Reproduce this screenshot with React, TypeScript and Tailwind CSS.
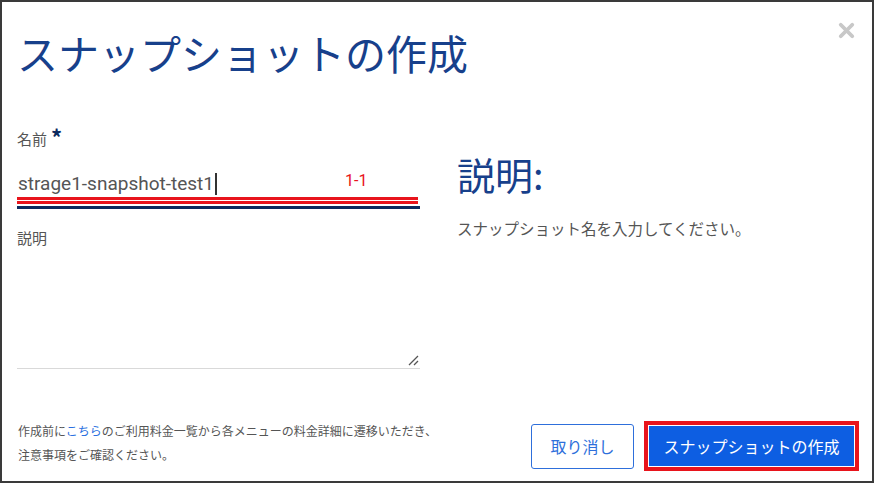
import { X } from "lucide-react";

const jp = "font-['Noto_Sans_CJK_JP',sans-serif]";
const latin = "font-['Roboto','Noto_Sans_CJK_JP',sans-serif]";

function NameField() {
  return (
    <div className="flex flex-col">
      <div className={`flex items-start gap-[4px] text-[15px] leading-[20px] text-[#555] ${jp}`}>
        <span>名前</span>
        <span className="mt-[-1px] text-[22px] leading-[16px] font-bold text-[#0b2a5e]">*</span>
      </div>
      <div className="relative mt-[23px] flex items-end pl-[1px]">
        <span className={`text-[19px] leading-[24px] text-[#555] ${latin}`}>strage1-snapshot-test1</span>
        <span className="mb-[1px] ml-[1px] h-[22px] w-[2px] bg-[#333]" />
        <span className={`absolute left-[328px] top-[0px] text-[16px] leading-[18px] text-[#e8141c] ${latin}`}>1-1</span>
      </div>
      <div className="mt-[1px] flex w-[401px] flex-col">
        <div className="h-[3px] bg-[#e8141c]" />
        <div className="mt-[1px] h-[3px] bg-[#e8141c]" />
      </div>
      <div className="mt-[2px] h-[3px] w-[403px] bg-[#0b2a5e]" />
    </div>
  );
}

function DescField() {
  return (
    <div className="mt-[19px] flex flex-col">
      <span className={`text-[15px] leading-[20px] text-[#555] ${jp}`}>説明</span>
      <div className="relative h-[121px] w-[403px] border-b border-[#d9d9d9]">
        <svg className="absolute bottom-[2px] right-[1px]" width="11" height="11" viewBox="0 0 11 11">
          <path d="M1 10 L10 1 M6 10 L10 6" stroke="#555" strokeWidth="1.3" fill="none" />
        </svg>
      </div>
    </div>
  );
}

export default function App() {
  return (
    <div className="flex h-[483px] w-[874px] flex-col border-2 border-[#3a3a3a] bg-white">
      <div className="flex items-start justify-between pl-[15px] pr-[14px] pt-[22px]">
        <h1 className={`text-[41px] leading-[56px] text-[#17408b] ${jp}`}>スナップショットの作成</h1>
        <X className="mt-[-5px] text-[#c8c8c8]" size={23} strokeWidth={4} />
      </div>

      <div className="mt-[49px] flex pl-[15px]">
        <div className="flex w-[403px] flex-col">
          <NameField />
          <DescField />
        </div>
        <div className="ml-[37px] flex flex-col pt-[19px]">
          <h2 className={`text-[38px] leading-[52px] text-[#17408b] ${jp}`}>説明:</h2>
          <p className={`mt-[18px] text-[15.5px] leading-[20px] text-[#555] ${jp}`}>
            スナップショット名を入力してください。
          </p>
        </div>
      </div>

      <div className="mt-auto flex items-end justify-between pb-[10px] pl-[16px] pr-[13px]">
        <p className={`mb-[4px] text-[12px] leading-[24px] text-[#555] ${jp}`}>
          作成前に<span className="text-[#2a6fe0]">こちら</span>のご利用料金一覧から各メニューの料金詳細に遷移いただき、
          <br />
          注意事項をご確認ください。
        </p>
        <div className="flex items-center gap-[10px]">
          <button className={`h-[45px] w-[103px] rounded-[3px] border border-[#2e6fdb] text-[16px] text-[#2e6fdb] ${jp}`}>
            取り消し
          </button>
          <div className="border-[4px] border-[#e8141c] p-[1px]">
            <button className={`h-[40px] w-[205px] bg-[#0d5ee2] text-[16px] text-white ${jp}`}>
              スナップショットの作成
            </button>
          </div>
        </div>
      </div>
    </div>
  );
}
